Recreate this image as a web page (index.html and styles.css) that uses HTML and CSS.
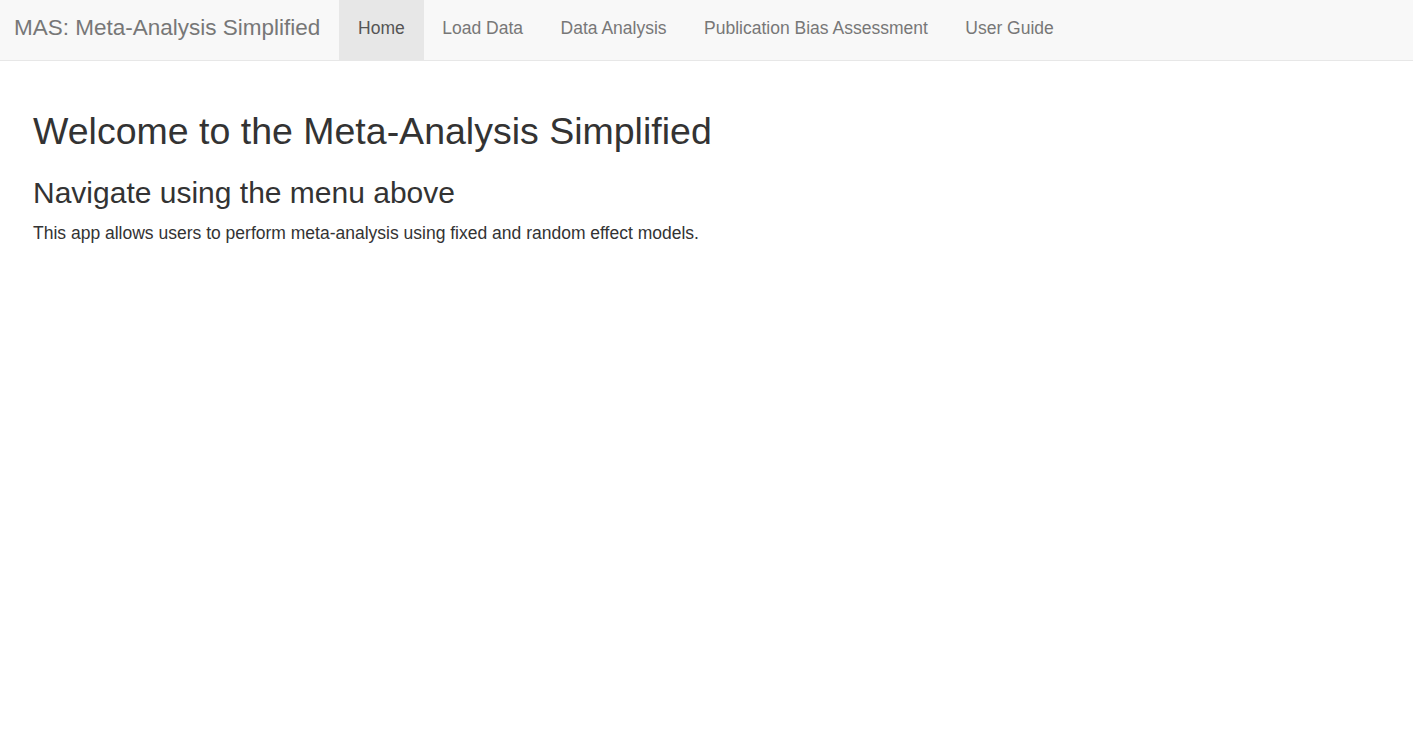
FILE: index.html
```html
<!DOCTYPE html>
<html>
<head>
<meta charset="utf-8">
<title>MAS: Meta-Analysis Simplified</title>
<link rel="stylesheet" href="styles.css">
</head>
<body>
<nav class="navbar">
  <span class="brand">MAS: Meta-Analysis Simplified</span>
  <ul class="nav">
    <li class="active"><a href="#">Home</a></li>
    <li><a href="#">Load Data</a></li>
    <li><a href="#">Data Analysis</a></li>
    <li><a href="#">Publication Bias Assessment</a></li>
    <li><a href="#">User Guide</a></li>
  </ul>
</nav>
<main class="content">
  <h2 class="title">Welcome to the Meta-Analysis Simplified</h2>
  <h3 class="subtitle">Navigate using the menu above</h3>
  <p class="text">This app allows users to perform meta-analysis using fixed and random effect models.</p>
</main>
</body>
</html>
```
FILE: styles.css
```css
* { box-sizing: border-box; }
html, body { margin: 0; padding: 0; }
body {
  font-family: "Liberation Sans", Arial, Helvetica, sans-serif;
  font-size: 17.5px;
  line-height: 1.42857;
  color: #333;
  background: #fff;
}
.navbar {
  display: flex;
  align-items: stretch;
  height: 61px;
  background: #f8f8f8;
  border-bottom: 1px solid #e7e7e7;
}
.brand {
  display: flex;
  align-items: center;
  padding: 0 19px 0 14px;
  font-size: 22.5px;
  color: #777;
  height: 56px;
}
.nav {
  display: flex;
  list-style: none;
  margin: 0;
  padding: 0;
}
.nav li { display: flex; }
.nav a {
  display: flex;
  align-items: center;
  height: 60px;
  padding: 0 18.75px 4px;
  color: #777;
  text-decoration: none;
}
.nav li.active a {
  background: #e7e7e7;
  color: #555;
}
.content {
  padding: 0 33px;
}
.title {
  font-weight: 500;
  font-size: 37.5px;
  line-height: 1.1;
  margin: 50px 0 12px;
}
.subtitle {
  font-weight: 500;
  font-size: 30px;
  line-height: 1.1;
  margin: 24px 0 12px;
}
.text {
  margin: 0;
}
```
